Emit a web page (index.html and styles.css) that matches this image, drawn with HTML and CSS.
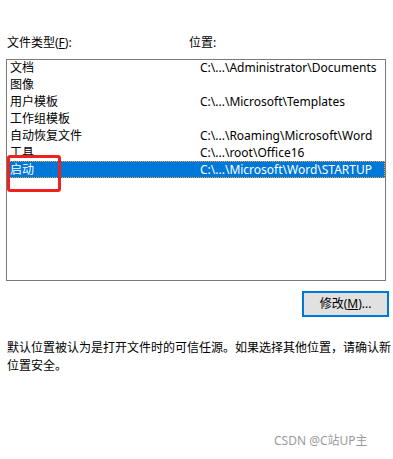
FILE: index.html
```html
<!DOCTYPE html>
<html lang="zh">
<head>
<meta charset="utf-8">
<link rel="stylesheet" href="styles.css">
</head>
<body>
<div class="page">
  <div class="labels">
    <span class="lbl-type">文件类型(<u>F</u>):</span>
    <span class="lbl-loc">位置:</span>
  </div>
  <div class="listbox">
    <div class="row"><span class="c1">文档</span><span class="c2">C:\...\Administrator\Documents</span></div>
    <div class="row"><span class="c1">图像</span><span class="c2"></span></div>
    <div class="row"><span class="c1">用户模板</span><span class="c2">C:\...\Microsoft\Templates</span></div>
    <div class="row"><span class="c1">工作组模板</span><span class="c2"></span></div>
    <div class="row"><span class="c1">自动恢复文件</span><span class="c2">C:\...\Roaming\Microsoft\Word</span></div>
    <div class="row"><span class="c1">工具</span><span class="c2">C:\...\root\Office16</span></div>
    <div class="row selected"><span class="c1">启动</span><span class="c2">C:\...\Microsoft\Word\STARTUP</span></div>
  </div>
  <div class="btnrow">
    <button class="btn">修改(<u>M</u>)...</button>
  </div>
  <p class="desc">默认位置被认为是打开文件时的可信任源。如果选择其他位置，请确认新位置安全。</p>
  <div class="redbox"></div>
  <div class="watermark">CSDN @C站UP主</div>
</div>
</body>
</html>
```

FILE: styles.css
```css
html, body {
  margin: 0;
  padding: 0;
  background: #ffffff;
}
.page {
  position: relative;
  width: 393px;
  height: 459px;
  overflow: hidden;
  font-family: "Noto Sans", "Noto Sans CJK SC", sans-serif;
  font-size: 12px;
  color: #000000;
}
.labels {
  display: flex;
  padding: 35px 0 0 7px;
  height: 16px;
  line-height: 16px;
}
.lbl-type {
  width: 182px;
}
.labels u, .btn u {
  text-decoration: underline;
  text-underline-offset: 1px;
}
.listbox {
  margin: 8px 0 0 6px;
  width: 378px;
  height: 220px;
  border: 1px solid #7a7a7a;
  box-sizing: content-box;
}
.row {
  display: flex;
  height: 17px;
  line-height: 15px;
  box-sizing: border-box;
  border: 1px solid transparent;
}
.row:first-child {
  margin-top: -1px;
}
.c1 {
  width: 190px;
  padding-left: 2px;
  white-space: nowrap;
}
.c2 {
  white-space: nowrap;
}
.selected {
  background: #0078d7;
  color: #ffffff;
  border: 1px dotted #f0a040;
}
.btnrow {
  display: flex;
  justify-content: flex-end;
  padding: 10px 4px 0 0;
}
.btn {
  width: 87px;
  height: 26px;
  border: 2px solid #0078d7;
  background: #e1e1e1;
  font-family: "Noto Sans", "Noto Sans CJK SC", sans-serif;
  font-size: 12px;
  color: #000000;
  padding: 0;
  line-height: 20px;
}
.desc {
  margin: 22px 0 0 7px;
  width: 386px;
  line-height: 18px;
}
.redbox {
  position: absolute;
  left: 7px;
  top: 155px;
  width: 48px;
  height: 31px;
  border: 3px solid #f0201e;
  border-radius: 3px;
}
.watermark {
  position: absolute;
  left: 274px;
  top: 433px;
  font-size: 12px;
  color: #9a9a9a;
  line-height: 16px;
}
```
